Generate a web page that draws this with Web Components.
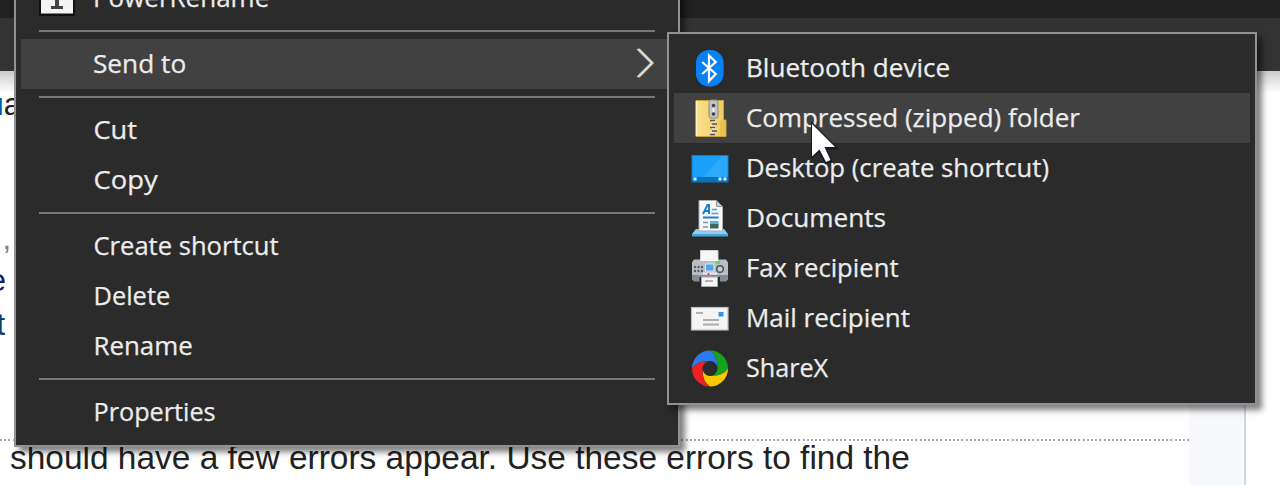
<!DOCTYPE html>
<html lang="en">
<head>
<meta charset="utf-8">
<title>Send to menu</title>
<style>
html,body{margin:0;width:1280px;height:485px;overflow:hidden;background:#fff}
context-menu{position:absolute}
context-menu.main{left:14px;top:-37px;width:666px;height:484px}
context-menu.sub{left:667px;top:32px;width:590px;height:373px}
mouse-pointer{position:absolute;left:806px;top:118px}
</style>
</head>
<body>
<page-backdrop>should have a few errors appear. Use these errors to find the</page-backdrop>

<context-menu class="main">
  <menu-row icon="rename" ink="95 173">PowerRename</menu-row>
  <menu-divider></menu-divider>
  <menu-row ink="94 91" active arrow>Send to</menu-row>
  <menu-divider></menu-divider>
  <menu-row ink="94.5 42.5">Cut</menu-row>
  <menu-row ink="94.5 63.5">Copy</menu-row>
  <menu-divider></menu-divider>
  <menu-row ink="94.5 184">Create shortcut</menu-row>
  <menu-row ink="95.5 73.5">Delete</menu-row>
  <menu-row ink="95.5 96">Rename</menu-row>
  <menu-divider></menu-divider>
  <menu-row ink="95.5 119">Properties</menu-row>
</context-menu>

<context-menu class="sub">
  <menu-row icon="bluetooth" ink="748 201">Bluetooth device</menu-row>
  <menu-row icon="zip" ink="747 332.5" active>Compressed (zipped) folder</menu-row>
  <menu-row icon="desktop" ink="748 300.5">Desktop (create shortcut)</menu-row>
  <menu-row icon="documents" ink="748 137">Documents</menu-row>
  <menu-row icon="fax" ink="748 150.5">Fax recipient</menu-row>
  <menu-row icon="mail" ink="748 162">Mail recipient</menu-row>
  <menu-row icon="sharex" ink="747 81.5">ShareX</menu-row>
</context-menu>
<mouse-pointer></mouse-pointer>

<script>
const FONT = '25.3px "Open Sans"';
const ruler = document.createElement('canvas').getContext('2d');
ruler.font = FONT;

const ICONS = {
rename: `<rect width="36" height="36" fill="#111"/><rect x="2" y="2" width="32" height="31.5" fill="#f4f4f4"/><path d="M12 10h12v3h-4v13h4v3H12v-3h4V13h-4z" fill="#444"/>`,
bluetooth: `<rect x="4" width="27.6" height="36.5" rx="13" fill="#0a80f5"/><path d="M10.2 12 23.8 24 17 31V5.500L23.800 12 10.200 24" fill="none" stroke="#fff" stroke-width="2.200"/>`,
zip: `<defs><linearGradient id="g" x2="1"><stop stop-color="#fbe08c"/><stop offset="1" stop-color="#efc95f"/></linearGradient></defs>
<path d="M4 0.500h27.500V20H34v16.500H4z" fill="url(#g)" stroke="#caa03a"/><path d="M28 21v14.500h5.500V20.500z" fill="#e9c14d"/><path d="M4.500 1v35" stroke="#fdf0b8" stroke-width="1.500"/>
<rect x="17" y="0" width="9" height="18" rx="2" fill="#c2c3c6" stroke="#8c8a84"/><circle cx="21.500" cy="5.500" r="1.800" fill="#444"/><circle cx="21.500" cy="14" r="1.800" fill="#444"/><path d="M21.500 8v4" stroke="#eee" stroke-width="2"/>
<path d="M18 20.500h5M20 24h5M18 27.500h5M20 31h5M18 34.500h5" stroke="#555" stroke-width="1.700"/><path d="M20 22.200h5M18 25.700h5M20 29.200h5M18 32.700h5" stroke="#e9e4cf" stroke-width="1.300"/>`,
desktop: `<rect x="0" y="5.500" width="36" height="26.500" fill="#18a0fb" stroke="#0d7fd0"/><path d="M12 27 30 6h5.500v21z" fill="#35adfd" opacity=".7"/><path d="M0 27h36v5H0z" fill="#0872b8"/><path d="M1.500 27.500h3v3h-3zM26.500 27.500h3v3h-3zM31.500 27.500h3v3h-3z" fill="#dff3ff"/>`,
documents: `<path d="M4 29h28l4 5H0z" fill="#8ecdf2"/><path d="M0 34h36v2.500H0z" fill="#4ba5dc"/><path d="M7 .5h17.500l6 6V31H7z" fill="#f6f8fa" stroke="#aab0b6"/><path d="M24.500.5v6h6z" fill="#c9ced3" stroke="#92999f"/>
<path d="M11 14 15.500 5h1.500v9M12.500 11h5" fill="none" stroke="#1f7fd1" stroke-width="2"/><path d="M20 9.500h5M19.500 13.500h7" stroke="#4aa3e4" stroke-width="1.700"/><path d="M11 17.500h15.500" stroke="#1e7fd2" stroke-width="2"/><path d="M11 22.500h5M11 27h5" stroke="#8a8f94" stroke-width="1.600"/><path d="M18 21h8.500v3.500H18z" fill="#5bb0ec"/><path d="M18 24h8.500v4.500H18z" fill="#41685a"/>`,
fax: `<path d="M8.500.5h17.500V13H8.500z" fill="#f6f6f6" stroke="#cfcfcf"/><path d="M2 9.500h32l2 3V26H0V12.500z" fill="#b9bec4"/><path d="M0 25h36v4.500l-2 2H2l-2-2z" fill="#858b92"/><path d="M8.500 8h17.500v3H8.500z" fill="#f6f6f6"/>
<path d="M7.500 27h3v7h-3zM25 27h3v7h-3z" fill="#202b36"/><path d="M9.500 27h16v9.500h-16z" fill="#f5f5f5" stroke="#aaa"/><path d="M13 31h8" stroke="#b5b5b5" stroke-width="2"/>
<path d="M13.500 14h8.500v7h-8.500z" fill="#4da5ee" stroke="#d7e9f7"/><path d="M11 22.500h14v2H11z" fill="#e8edf2"/><circle cx="16.500" cy="24" r="1" fill="#e24"/><circle cx="28" cy="19" r="3.300" fill="#c9ced3" stroke="#4b5157" stroke-width="1.500"/><g fill="#555c63"><circle cx="3" cy="17" r="1.200"/><circle cx="6.500" cy="17" r="1.200"/><circle cx="10" cy="17" r="1.200"/><circle cx="3" cy="21" r="1.200"/><circle cx="6.500" cy="21" r="1.200"/><circle cx="10" cy="21" r="1.200"/></g><path d="M24 12.500h4" stroke="#53e42b" stroke-width="2.500"/>`,
mail: `<rect x="-.5" y="7.500" width="36.500" height="22.500" fill="#f5f5f5" stroke="#bdbdbd" stroke-width="1.200"/><path d="M4 13h7" stroke="#aaa" stroke-width="1.800"/><path d="M11 20h16M11 24.500h16" stroke="#aeaeae" stroke-width="2"/><path d="M26.500 12h5v4.500h-5z" fill="#2f93ea"/>`,
sharex: `<defs><path id="s" d="M0 18A18 18 0 0 1 18 0Q26 5 25.500 18A7.500 7.500 0 0 0 18 10.500Q5 10 0 18z"/></defs><g transform="translate(0 .5)"><use href="#s" fill="#2a7bf0"/><use href="#s" fill="#17a31c" transform="rotate(90 18 18)"/><use href="#s" fill="#fbc704" transform="rotate(180 18 18)"/><use href="#s" fill="#ec2222" transform="rotate(270 18 18)"/></g>`
};

customElements.define('page-backdrop', class extends HTMLElement {
  constructor() {
    super();
    this.attachShadow({mode:'open'}).innerHTML = `<style>
:host{display:flex;flex-direction:column;height:485px;overflow:hidden;background:#fff;font:31px/36px "Liberation Sans",sans-serif;color:#222;white-space:nowrap}
.title{height:18px;flex:none;background:#212121}
.bar{height:53px;flex:none;background:#333}
.body{flex:1;display:grid;grid-template-columns:1189px 55px 2px 1fr;min-height:0;background:linear-gradient(#ccc,#fff 22px)}
.side{background:linear-gradient(#ccc,#f6f8fb 22px)} .line{background:#d5d7da}
.doc{display:flex;flex-direction:column;overflow:hidden;min-width:0}
.frag{flex:none;display:flex;justify-content:flex-end;height:36px}
.a{width:21px;margin-top:16px}.a b{font-weight:400;color:#0057a8}
.b{width:11px;margin-top:98px;color:#8a7a66}
.c{width:6px;margin-top:6px;color:#10206a}
.d{width:5px;margin-top:8px;color:#10406a}
.dots{flex:none;height:2px;margin-top:96px;background:repeating-linear-gradient(90deg,#aaa 0 2px,transparent 2px 4.18px)}
.text{padding-left:10px;height:36px;flex:none;margin-top:-1px;font-size:33px}
.text span{display:inline-block;transform-origin:0 50%}
</style><div class="title"></div><div class="bar"></div><div class="body"><div class="doc">
<div class="frag a"><b>u</b>a</div><div class="frag b">,</div><div class="frag c">e</div><div class="frag d">t</div><div class="dots"></div><div class="text"><span><slot></slot></span></div>
</div><div class="side"></div><div class="line"></div><div></div></div>`;
  }
  connectedCallback() {
    const s = this.shadowRoot.querySelector('.text span');
    s.style.transform = `scaleX(${900 / s.offsetWidth})`;
  }
});

customElements.define('context-menu', class extends HTMLElement {
  constructor() {
    super();
    this.attachShadow({mode:'open'}).innerHTML = `<style>
:host{display:flex;flex-direction:column;box-sizing:border-box;padding:8px 5px;border:2px solid #929292;background:#2b2b2b;box-shadow:5px 5px 6px rgba(0,0,0,.5)}
:host(.sub){padding-top:9px}
</style><slot></slot>`;
  }
});

customElements.define('menu-divider', class extends HTMLElement {
  constructor() {
    super();
    this.attachShadow({mode:'open'}).innerHTML = `<style>
:host{display:flex;align-items:center;height:16px;flex:none;padding:0 18px}
i{flex:1;height:2px;background:#777}
</style><i></i>`;
  }
});

customElements.define('menu-row', class extends HTMLElement {
  constructor() {
    super();
    this.attachShadow({mode:'open'}).innerHTML = `<style>
:host{display:flex;align-items:center;height:50px;flex:none;box-sizing:border-box;padding:0 18px;color:#ececec;white-space:nowrap;font:${FONT},"Noto Sans",sans-serif}
:host([active]){background:#414141}
.icon{width:36px;height:37px;flex:none;margin-right:17px;overflow:visible}
.label{display:inline-block;line-height:50px;transform-origin:0 50%;-webkit-text-stroke:.25px currentColor}
.arrow{margin:0 0 2px auto;flex:none}
</style><svg class="icon" viewBox="0 0 36 37">${ICONS[this.getAttribute('icon')] || ''}</svg><span class="label"><slot></slot></span>${this.hasAttribute('arrow') ? '<svg class="arrow" width="20" height="32" fill="none" stroke-width="1.800"><path d="M2.300 2 16.300 16 2.300 30" stroke="#6fb6e0"/><path d="M4 2 18 16 4 30" stroke="#e0ad76"/><path d="M3 2 17 16 3 30" stroke="#e8e8e8" stroke-width="1.400"/></svg>' : ''}`;
  }
  connectedCallback() {
    // Condense each label to its ink width, with the left side bearing removed.
    const [x, w] = this.getAttribute('ink').split(' ').map(Number);
    const m = ruler.measureText(this.textContent);
    const k = w / (m.actualBoundingBoxRight + m.actualBoundingBoxLeft);
    const el = this.shadowRoot.querySelector('.label');
    const left = el.getBoundingClientRect().left;
    el.style.transform = `translate(${x - left + m.actualBoundingBoxLeft * k}px, -1px) scaleX(${k})`;
  }
});

customElements.define('mouse-pointer', class extends HTMLElement {
  constructor() {
    super();
    this.attachShadow({mode:'open'}).innerHTML = `<style>:host{display:block}svg{display:block}</style>
<svg width="38" height="52"><path d="M5.500 4V40.500L13 33.500 19.500 46 26 43 21 31H32z" fill="#181828" stroke="#181828" stroke-linejoin="round"/><path d="M6 6V38.500L13.500 31.500 20 44 24.500 42 18.500 29H29z" fill="#fff"/></svg>`;
  }
});
</script>
</body>
</html>
